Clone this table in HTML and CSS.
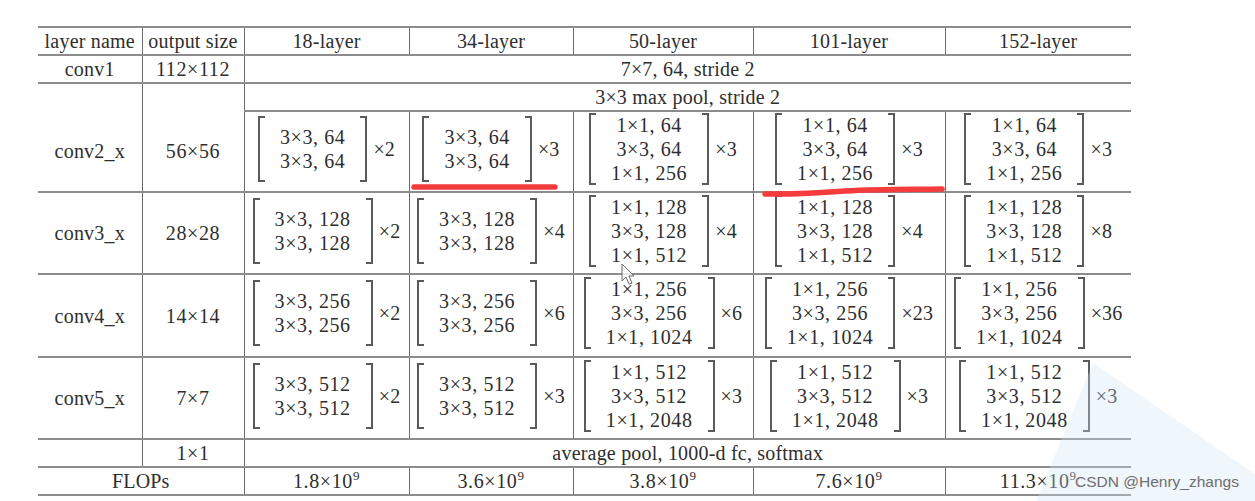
FILE: index.html
```html
<!DOCTYPE html>
<html lang="en">
<head>
  <meta charset="UTF-8">
  <title>ResNet architectures</title>
  <link rel="stylesheet" href="styles.css">
</head>
<body>
  <div class="page">
    <table class="arch">
      <colgroup>
        <col class="c-name"><col class="c-size"><col class="c18"><col class="c34"><col class="c50"><col class="c101"><col class="c152">
      </colgroup>
      <tr class="thin">
        <td>layer name</td><td>output size</td><td>18-layer</td><td>34-layer</td><td>50-layer</td><td>101-layer</td><td>152-layer</td>
      </tr>
      <tr class="thin">
        <td>conv1</td><td class="num">112×112</td><td colspan="5">7×7, 64, stride 2</td>
      </tr>
      <tr class="thin">
        <td class="open"></td><td class="open"></td><td colspan="5">3×3 max pool, stride 2</td>
      </tr>
      <tr class="conv2">
        <td class="cont">conv2_x</td><td class="cont num">56×56</td>
        <td><div class="blk"><div class="mat"><i class="br l"></i><div class="rows"><span>3×3, 64</span><span>3×3, 64</span></div><i class="br r"></i></div><span class="rep">×2</span></div></td>
        <td><div class="blk"><div class="mat"><i class="br l"></i><div class="rows"><span>3×3, 64</span><span>3×3, 64</span></div><i class="br r"></i></div><span class="rep">×3</span></div></td>
        <td><div class="blk"><div class="mat three"><i class="br l"></i><div class="rows"><span>1×1, 64</span><span>3×3, 64</span><span>1×1, 256</span></div><i class="br r"></i></div><span class="rep">×3</span></div></td>
        <td><div class="blk"><div class="mat three"><i class="br l"></i><div class="rows"><span>1×1, 64</span><span>3×3, 64</span><span>1×1, 256</span></div><i class="br r"></i></div><span class="rep">×3</span></div></td>
        <td><div class="blk"><div class="mat three"><i class="br l"></i><div class="rows"><span>1×1, 64</span><span>3×3, 64</span><span>1×1, 256</span></div><i class="br r"></i></div><span class="rep">×3</span></div></td>
      </tr>
      <tr class="conv3">
        <td>conv3_x</td><td class="num">28×28</td>
        <td><div class="blk"><div class="mat"><i class="br l"></i><div class="rows"><span>3×3, 128</span><span>3×3, 128</span></div><i class="br r"></i></div><span class="rep">×2</span></div></td>
        <td><div class="blk"><div class="mat"><i class="br l"></i><div class="rows"><span>3×3, 128</span><span>3×3, 128</span></div><i class="br r"></i></div><span class="rep">×4</span></div></td>
        <td><div class="blk"><div class="mat three"><i class="br l"></i><div class="rows"><span>1×1, 128</span><span>3×3, 128</span><span>1×1, 512</span></div><i class="br r"></i></div><span class="rep">×4</span></div></td>
        <td><div class="blk"><div class="mat three"><i class="br l"></i><div class="rows"><span>1×1, 128</span><span>3×3, 128</span><span>1×1, 512</span></div><i class="br r"></i></div><span class="rep">×4</span></div></td>
        <td><div class="blk"><div class="mat three"><i class="br l"></i><div class="rows"><span>1×1, 128</span><span>3×3, 128</span><span>1×1, 512</span></div><i class="br r"></i></div><span class="rep">×8</span></div></td>
      </tr>
      <tr class="conv4">
        <td>conv4_x</td><td class="num">14×14</td>
        <td><div class="blk"><div class="mat"><i class="br l"></i><div class="rows"><span>3×3, 256</span><span>3×3, 256</span></div><i class="br r"></i></div><span class="rep">×2</span></div></td>
        <td><div class="blk"><div class="mat"><i class="br l"></i><div class="rows"><span>3×3, 256</span><span>3×3, 256</span></div><i class="br r"></i></div><span class="rep">×6</span></div></td>
        <td><div class="blk"><div class="mat three"><i class="br l"></i><div class="rows"><span>1×1, 256</span><span>3×3, 256</span><span>1×1, 1024</span></div><i class="br r"></i></div><span class="rep">×6</span></div></td>
        <td><div class="blk"><div class="mat three"><i class="br l"></i><div class="rows"><span>1×1, 256</span><span>3×3, 256</span><span>1×1, 1024</span></div><i class="br r"></i></div><span class="rep">×23</span></div></td>
        <td><div class="blk"><div class="mat three"><i class="br l"></i><div class="rows"><span>1×1, 256</span><span>3×3, 256</span><span>1×1, 1024</span></div><i class="br r"></i></div><span class="rep">×36</span></div></td>
      </tr>
      <tr class="conv5">
        <td>conv5_x</td><td class="num">7×7</td>
        <td><div class="blk"><div class="mat"><i class="br l"></i><div class="rows"><span>3×3, 512</span><span>3×3, 512</span></div><i class="br r"></i></div><span class="rep">×2</span></div></td>
        <td><div class="blk"><div class="mat"><i class="br l"></i><div class="rows"><span>3×3, 512</span><span>3×3, 512</span></div><i class="br r"></i></div><span class="rep">×3</span></div></td>
        <td><div class="blk"><div class="mat three"><i class="br l"></i><div class="rows"><span>1×1, 512</span><span>3×3, 512</span><span>1×1, 2048</span></div><i class="br r"></i></div><span class="rep">×3</span></div></td>
        <td><div class="blk"><div class="mat three"><i class="br l"></i><div class="rows"><span>1×1, 512</span><span>3×3, 512</span><span>1×1, 2048</span></div><i class="br r"></i></div><span class="rep">×3</span></div></td>
        <td><div class="blk"><div class="mat three"><i class="br l"></i><div class="rows"><span>1×1, 512</span><span>3×3, 512</span><span>1×1, 2048</span></div><i class="br r"></i></div><span class="rep">×3</span></div></td>
      </tr>
      <tr class="thin">
        <td></td><td class="num">1×1</td><td colspan="5">average pool, 1000-d fc, softmax</td>
      </tr>
      <tr class="thin">
        <td colspan="2">FLOPs</td>
        <td class="num">1.8×10<sup>9</sup></td><td class="num">3.6×10<sup>9</sup></td><td class="num">3.8×10<sup>9</sup></td><td class="num">7.6×10<sup>9</sup></td><td class="num">11.3×10<sup>9</sup></td>
      </tr>
    </table>

    <!-- marks drawn on top of the screenshot -->
    <svg class="overlay" viewBox="0 0 1255 501" width="1255" height="501">
      <polygon points="1093,363 1255,474 1255,501 1036,501" fill="#cfe6f7" opacity="0.32"/>
      <path d="M414 187 L555 187" stroke="#f43c3c" stroke-width="5.5" stroke-linecap="round" fill="none"/>
      <path d="M765 194 C800 194.5 820 193 845 191 C880 189 910 189.5 942 189" stroke="#f43c3c" stroke-width="5.5" stroke-linecap="round" fill="none"/>
      <path d="M622 264 L622 281 L626 277 L629 284 L632 283 L629 276 L634 276 Z" fill="#fff" fill-opacity="0.8" stroke="#6a6a6a" stroke-width="1"/>
    </svg>
    <div class="csdn">CSDN @Henry_zhangs</div>
  </div>
</body>
</html>
```

FILE: styles.css
```css
body {
  margin: 0;
  background: #fff;
}
.page {
  position: relative;
  width: 1255px;
  height: 501px;
  overflow: hidden;
  padding: 26px 0 0 38px;
  box-sizing: border-box;
}
.arch {
  border-collapse: collapse;
  table-layout: fixed;
  width: 1093px;
  font-family: "Liberation Serif", "Times New Roman", serif;
  font-size: 20px;
  line-height: 24px;
  letter-spacing: 0.2px;
  color: #2e2e2e;
}
.c-name { width: 104px; }
.c-size { width: 102px; }
.c18 { width: 165px; }
.c34 { width: 164px; }
.c50 { width: 180px; }
.c101 { width: 192px; }
.c152 { width: 186px; }
.arch td {
  padding: 0;
  text-align: center;
  vertical-align: middle;
  white-space: nowrap;
  border-top: 2px solid #8c8c8c;
  border-bottom: 2px solid #8c8c8c;
  border-left: 1px solid #6a6a6a;
  border-right: 1px solid #6a6a6a;
}
.arch td:first-child { border-left: none; }
.arch td:last-child { border-right: none; }
.arch td.open { border-bottom: none; }
.arch td.cont { border-top: none; }
.arch td.num { letter-spacing: 0.6px; }
.thin { height: 28px; }
.conv2 { height: 81px; }
.conv3 { height: 82px; }
.conv4 { height: 83px; }
.conv5 { height: 82px; }
sup {
  font-size: 13px;
  line-height: 0;
  vertical-align: 8px;
}
.blk {
  display: inline-flex;
  align-items: center;
}
.mat {
  display: flex;
}
.br {
  width: 5px;
  border: 2px solid #5a5a5a;
}
.br.l { border-right: none; }
.br.r { border-left: none; }
.rows {
  display: flex;
  flex-direction: column;
  align-items: center;
  padding: 9px 15px;
  letter-spacing: 0.6px;
}
.mat.three .rows { padding: 0 15px; }
.rep {
  margin-left: 6px;
}
.overlay {
  position: absolute;
  left: 0;
  top: 0;
  pointer-events: none;
}
.csdn {
  position: absolute;
  left: 1075px;
  top: 472px;
  font-family: "Liberation Sans", Arial, sans-serif;
  font-size: 15.5px;
  line-height: 20px;
  letter-spacing: 0;
  color: #6e6e6e;
}
```
